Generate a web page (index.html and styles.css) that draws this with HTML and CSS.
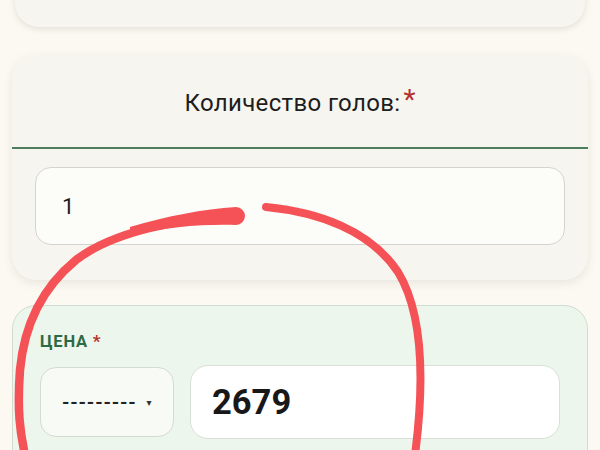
FILE: index.html
```html
<!DOCTYPE html>
<html lang="ru">
<head>
<meta charset="utf-8">
<link rel="stylesheet" href="styles.css">
</head>
<body>
<main class="page">
  <section class="card card-top"></section>

  <section class="card card-qty">
    <header class="qty-head">
      <span class="qty-title">Количество голов:</span><span class="req req-big">*</span>
    </header>
    <div class="qty-body">
      <div class="field">1</div>
    </div>
  </section>

  <section class="card card-price">
    <div class="price-label">ЦЕНА <span class="req">*</span></div>
    <div class="price-row">
      <div class="select"><span class="dashes">---------</span><span class="caret">▾</span></div>
      <div class="amount">2679</div>
    </div>
  </section>
</main>

<svg class="scribble" width="600" height="450" viewBox="0 0 600 450">
  <path d="M238,216 C180,218 112,232 76,260 C42,288 24,326 20,370 C17,410 20,432 25,455" fill="none" stroke="#f45256" stroke-width="8.5" stroke-linecap="round"/>
  <path d="M130,227 C168,216 203,209 236,207 A9,9 0 0 1 236,225 C203,224 168,227 130,235 Z" fill="#f45256"/>
  <path d="M266,207 C318,212 370,230 398,272 C420,308 426,370 415,455" fill="none" stroke="#f45256" stroke-width="8" stroke-linecap="round"/>
</svg>
</body>
</html>
```
FILE: styles.css
```css
html, body {
  margin: 0;
  padding: 0;
}
body {
  width: 600px;
  height: 450px;
  overflow: hidden;
  background: #fbf9f2;
  font-family: Roboto, "Noto Sans", "DejaVu Sans", sans-serif;
  position: relative;
}
.page {
  padding: 0 12px;
  display: flex;
  flex-direction: column;
}
.card {
  border-radius: 24px;
  box-sizing: border-box;
}
.card-top {
  height: 60px;
  margin-top: -33px;
  margin-left: 3px;
  margin-right: 3px;
  background: #f7f5f0;
  box-shadow: 0 2px 6px rgba(120, 110, 90, 0.18);
}
.card-qty {
  margin-top: 28px;
  background: #f7f5f0;
  box-shadow: 0 3px 10px rgba(120, 110, 90, 0.14);
  overflow: hidden;
}
.qty-head {
  height: 94px;
  border-bottom: 2px solid #4f7d5e;
  display: flex;
  justify-content: center;
  align-items: center;
  padding-top: 3px;
  box-sizing: border-box;
}
.qty-title {
  font-size: 24px;
  color: #1d1d1d;
  letter-spacing: 0.35px;
}
.req {
  color: #b3312e;
}
.req-big {
  font-size: 28px;
  margin-left: 3px;
  position: relative;
  top: -3px;
}
.qty-body {
  padding: 18px 23px 35px;
}
.field {
  height: 78px;
  box-sizing: border-box;
  border: 1px solid #d5d3ce;
  border-radius: 16px;
  background: #fcfcf9;
  display: flex;
  align-items: center;
  padding-left: 26px;
  font-size: 22px;
  color: #1d1d1d;
}
.card-price {
  margin-top: 25px;
  background: #edf6ec;
  border: 1px solid #cfdccf;
  padding: 25px 27px 30px;
  height: 200px;
}
.price-label {
  font-size: 16.5px;
  font-weight: 700;
  color: #2d6a44;
  letter-spacing: 0.8px;
}
.price-label .req {
  font-size: 17px;
}
.price-row {
  margin-top: 14px;
  display: flex;
  align-items: center;
  gap: 16px;
}
.select {
  width: 134px;
  height: 70px;
  box-sizing: border-box;
  border: 1px solid #d4dcd2;
  border-radius: 16px;
  background: #f8faf5;
  display: flex;
  align-items: center;
  padding-left: 21px;
  gap: 10px;
  color: #222;
}
.dashes {
  font-size: 19px;
  font-weight: 700;
  letter-spacing: 0.8px;
}
.caret {
  font-size: 10px;
  color: #333;
}
.amount {
  width: 370px;
  height: 74px;
  box-sizing: border-box;
  border: 1px solid #d8e0d6;
  border-radius: 18px;
  background: #ffffff;
  display: flex;
  align-items: center;
  padding-left: 21px;
  font-size: 34.5px;
  font-weight: 700;
  color: #181818;
}
.scribble {
  position: absolute;
  left: 0;
  top: 0;
  pointer-events: none;
}
```
